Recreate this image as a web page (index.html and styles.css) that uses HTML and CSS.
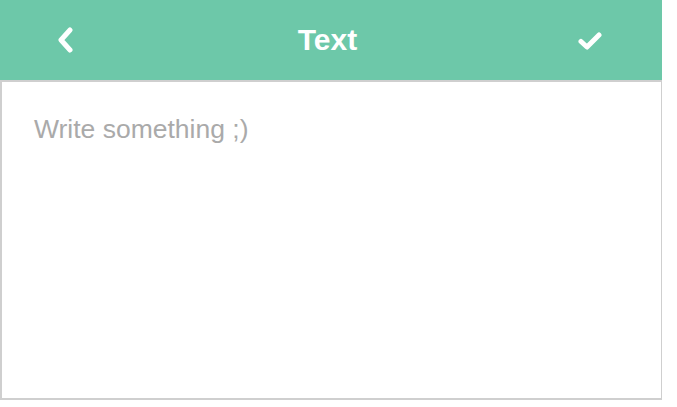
FILE: index.html
```html
<!DOCTYPE html>
<html>
<head>
<meta charset="utf-8">
<link rel="stylesheet" href="styles.css">
</head>
<body>
<div class="app">
  <header class="bar">
    <button class="icon-btn back" aria-label="Back">
      <svg width="16" height="26" viewBox="0 0 16 26"><path d="M13 3 L4 13 L13 23" fill="none" stroke="#fff" stroke-width="5" stroke-linecap="round" stroke-linejoin="round"/></svg>
    </button>
    <h1 class="title">Text</h1>
    <button class="icon-btn ok" aria-label="Done">
      <svg width="24" height="20" viewBox="0 0 24 20"><path d="M3 10.5 L9 16 L21 4" fill="none" stroke="#fff" stroke-width="5" stroke-linecap="round" stroke-linejoin="round"/></svg>
    </button>
  </header>
  <div class="editor">
    <div class="placeholder">Write something ;)</div>
  </div>
</div>
</body>
</html>
```

FILE: styles.css
```css
html, body { margin: 0; padding: 0; background: #fff; }
body { font-family: "Liberation Sans", Arial, sans-serif; }
.app { width: 662px; }
.bar {
  height: 80px;
  background: #6dc8a9;
  display: flex;
  align-items: center;
  justify-content: space-between;
  padding: 0 60px 0 57px;
}
.icon-btn {
  background: none; border: 0; padding: 0; margin: 0;
  display: flex; align-items: center; justify-content: center;
}
.icon-btn svg { display: block; }
.ok { margin-top: 2px; }
.title {
  margin: 0;
  color: #fff;
  font-size: 30px;
  font-weight: bold;
  margin-left: 4px;
}
.editor {
  box-sizing: border-box;
  height: 320px;
  border: 2px solid #cfcfcf;
  border-right-width: 1px;
  padding: 32px 32px;
}
.placeholder {
  color: #aaaaaa;
  font-size: 26.5px;
  line-height: 30px;
}
```
